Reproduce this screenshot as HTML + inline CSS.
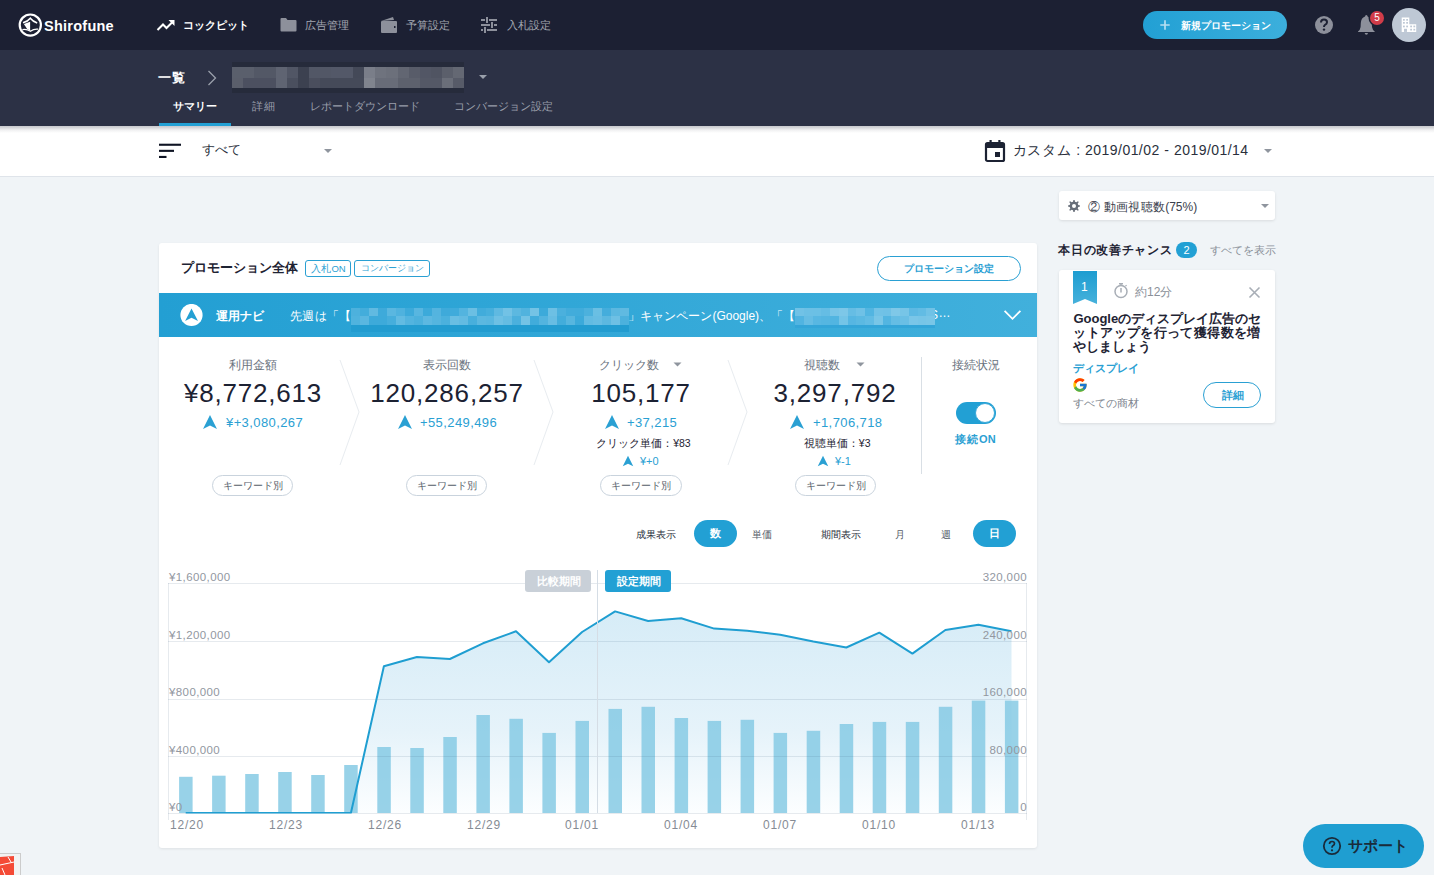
<!DOCTYPE html>
<html><head><meta charset="utf-8">
<style>
*{margin:0;padding:0;box-sizing:border-box}
html,body{width:1434px;height:875px;overflow:hidden;background:#f0f4f7;font-family:"Liberation Sans",sans-serif;color:#1e2333}
.a{position:absolute;white-space:nowrap}
#top{position:absolute;left:0;top:0;width:1434px;height:50px;background:#1c2033}
#sub{position:absolute;left:0;top:50px;width:1434px;height:76px;background:#2c3145}
#filter{position:absolute;left:0;top:126px;width:1434px;height:51px;background:linear-gradient(180deg,rgba(40,45,60,0.26) 0px,rgba(40,45,60,0.2) 1.5px,rgba(40,45,60,0.07) 4px,rgba(40,45,60,0.0) 7px),#fff;border-bottom:1px solid #dfe4ea}
.navt{font-size:11px;color:#a3a7b1;top:18px}
.tab{font-size:11px;color:#9a9fab}
.card{position:absolute;background:#fff;border-radius:3px;box-shadow:0 1px 2px rgba(0,0,0,0.08)}
.lbl{font-size:12px;color:#6b7380;text-align:center}
.big{font-size:26px;color:#1c2233;text-align:center;letter-spacing:0.8px}
.delta{font-size:13px;color:#2aa0d3;letter-spacing:0.4px}
.kw{position:absolute;height:21px;border:1px solid #c9d3dd;border-radius:11px;font-size:10px;color:#555d69;text-align:center;line-height:19px}
.axl{font-size:11.5px;color:#92979f;letter-spacing:0.4px;margin-top:1px}
.xl{font-size:12px;color:#858b94;letter-spacing:0.8px}
.jj{display:inline-block;vertical-align:top;text-align:justify;text-align-last:justify;white-space:nowrap}
.j{text-align:justify!important;text-align-last:justify!important;white-space:nowrap}
</style></head><body>
<!-- TOP NAV -->
<div id="top">
  <svg class="a" style="left:14px;top:9px" width="32" height="32" viewBox="0 0 32 32">
    <circle cx="16.3" cy="16.1" r="10.6" fill="none" stroke="#fff" stroke-width="2.2"/>
    <path d="M9 13.8 Q13.6 12.6 16.3 9.2 Q19 12.6 23.2 14" fill="none" stroke="#fff" stroke-width="1.6"/>
    <path d="M9.9 15 L16.1 12.8 L16.1 22 L12.6 19.2Z" fill="#fff"/>
    <path d="M8.4 20.6 Q12.5 19.6 16.4 22.3 Q20.2 19.6 24.2 20.2" fill="none" stroke="#fff" stroke-width="1.3"/>
  </svg>
  <div class="a" style="left:44px;top:18px;font-size:14.5px;font-weight:bold;color:#fff;letter-spacing:0.25px">Shirofune</div>
  <svg class="a" style="left:156px;top:18px" width="20" height="14" viewBox="0 0 20 14">
    <path d="M1.5 12 L7 6.5 L10.5 10 L17 3.5" fill="none" stroke="#fff" stroke-width="2"/>
    <path d="M12.5 2 L18.5 2 L18.5 8 Z" fill="#fff"/>
  </svg>
  <div class="j a navt" style="left:183.4px;width:63.2px;color:#fff;font-weight:bold">コックピット</div>
  <svg class="a" style="left:280px;top:17px" width="17" height="15" viewBox="0 0 17 15">
    <path d="M0.5 2 Q0.5 1 1.5 1 L6 1 L7.5 3 L15.5 3 Q16.5 3 16.5 4 L16.5 13.5 Q16.5 14.5 15.5 14.5 L1.5 14.5 Q0.5 14.5 0.5 13.5Z" fill="#8d909b"/>
  </svg>
  <div class="j a navt" style="left:304.4px;width:43.2px;left:305px">広告管理</div>
  <svg class="a" style="left:380px;top:16px" width="18" height="18" viewBox="0 0 18 18">
    <path d="M1 5 L13 1 L14 4 Z" fill="#8d909b"/>
    <rect x="1" y="5" width="16" height="12" rx="1" fill="#8d909b"/>
    <rect x="14" y="10" width="1.5" height="2" fill="#1c2033"/>
  </svg>
  <div class="j a navt" style="left:405.4px;width:43.2px;left:406px">予算設定</div>
  <svg class="a" style="left:480px;top:17px" width="18" height="16" viewBox="0 0 18 16">
    <rect x="1" y="2" width="4" height="2" fill="#8d909b"/><rect x="9" y="2" width="8" height="2" fill="#8d909b"/><rect x="6" y="0" width="2" height="6" fill="#8d909b"/>
    <rect x="1" y="7" width="9" height="2" fill="#8d909b"/><rect x="14" y="7" width="3" height="2" fill="#8d909b"/><rect x="11" y="5" width="2" height="6" fill="#8d909b"/>
    <rect x="1" y="12" width="2" height="2" fill="#8d909b"/><rect x="7" y="12" width="10" height="2" fill="#8d909b"/><rect x="4" y="10" width="2" height="6" fill="#8d909b"/>
  </svg>
  <div class="j a navt" style="left:506.4px;width:43.2px;left:507px">入札設定</div>
  <div class="a" style="left:1143px;top:11px;width:144px;height:28px;border-radius:14px;background:linear-gradient(90deg,#22a0d4,#3cafdc)"></div>
  <svg class="a" style="left:1160px;top:19.5px" width="10" height="10" viewBox="0 0 10 10"><path d="M5 0.3 L5 9.7 M0.3 5 L9.7 5" stroke="#b5def1" stroke-width="1.7"/></svg>
  <div class="j a" style="left:1181.4px;width:89.7px;top:18.5px;font-size:10px;font-weight:bold;color:#fff">新規プロモーション</div>
  <svg class="a" style="left:1314px;top:15px" width="20" height="20" viewBox="0 0 20 20">
    <circle cx="10" cy="10" r="9" fill="#8d909b"/>
    <path d="M7 7.5 Q7 4.5 10 4.5 Q13 4.5 13 7.2 Q13 8.8 11 9.8 Q10 10.3 10 12" fill="none" stroke="#1c2033" stroke-width="2"/>
    <circle cx="10" cy="14.6" r="1.2" fill="#1c2033"/>
  </svg>
  <svg class="a" style="left:1356px;top:14px" width="22" height="22" viewBox="0 0 22 22">
    <path d="M10.3 1 Q11.5 1 11.6 2.5 Q15.5 3.8 15.8 9 L16 13 Q16.5 16 18.7 17.5 L18.7 18 L2 18 L2 17.5 Q4.2 16 4.6 13 L4.8 9 Q5.1 3.8 9 2.5 Q9.1 1 10.3 1Z" fill="#8d909b"/>
    <path d="M8.7 19 L12 19 Q11.8 20.8 10.35 20.8 Q8.9 20.8 8.7 19Z" fill="#8d909b"/>
  </svg>
  <div class="a" style="left:1370px;top:11px;width:14px;height:14px;border-radius:7px;background:#d03c49;box-shadow:0 0 0 1.5px #1c2033;color:#fff;font-size:10px;text-align:center;line-height:14px">5</div>
  <div class="a" style="left:1392px;top:8px;width:34px;height:34px;border-radius:17px;background:#bec8d5"></div>
  <svg class="a" style="left:1400px;top:16px" width="18" height="18" viewBox="0 0 18 18">
    <path d="M1.7 15.9 L1.7 1.5 L9.3 1.5 L9.3 8.3 L16.2 8.3 L16.2 15.9 Z" fill="#fff"/>
    <g fill="#bec8d5"><rect x="3" y="3" width="1.8" height="1.7"/><rect x="6.2" y="3" width="1.8" height="1.7"/><rect x="3" y="6" width="1.8" height="1.7"/><rect x="6.2" y="6" width="1.8" height="1.7"/><rect x="3" y="9.6" width="1.8" height="1.7"/><rect x="6.2" y="9.6" width="1.8" height="1.7"/><rect x="10.2" y="9.6" width="1.8" height="1.7"/><rect x="13.4" y="9.6" width="1.8" height="1.7"/><rect x="10.2" y="12.8" width="1.8" height="1.7"/><rect x="13.4" y="12.8" width="1.8" height="1.7"/><rect x="4" y="12.8" width="3" height="3.1"/></g>
  </svg>
</div>
<!-- SUB HEADER -->
<div id="sub">
  <div class="j a" style="left:158.4px;width:26.2px;top:19px;font-size:13px;font-weight:bold;color:#fff">一覧</div>
  <svg class="a" style="left:206px;top:20px" width="12" height="16" viewBox="0 0 12 16"><path d="M2.5 1 L9.5 8 L2.5 15" fill="none" stroke="#9aa0ab" stroke-width="1.3"/></svg>
  <div class="a" style="left:231.6px;top:12px;width:232.2px;height:31.4px;background:#262b3b"></div>
<div class="a" style="left:231.6px;top:16.9px;width:11.4px;height:10.8px;background:#5a5f6c"></div>
<div class="a" style="left:231.6px;top:27.7px;width:11.4px;height:10.8px;background:#5a5e6b"></div>
<div class="a" style="left:242.7px;top:16.9px;width:11.4px;height:10.8px;background:#5a5f6c"></div>
<div class="a" style="left:242.7px;top:27.7px;width:11.4px;height:10.8px;background:#4c5060"></div>
<div class="a" style="left:253.7px;top:16.9px;width:11.4px;height:10.8px;background:#535866"></div>
<div class="a" style="left:253.7px;top:27.7px;width:11.4px;height:10.8px;background:#4c5060"></div>
<div class="a" style="left:264.8px;top:16.9px;width:11.4px;height:10.8px;background:#535866"></div>
<div class="a" style="left:264.8px;top:27.7px;width:11.4px;height:10.8px;background:#4c5060"></div>
<div class="a" style="left:275.8px;top:16.9px;width:11.4px;height:10.8px;background:#5f6472"></div>
<div class="a" style="left:275.8px;top:27.7px;width:11.4px;height:10.8px;background:#5f6472"></div>
<div class="a" style="left:286.9px;top:16.9px;width:11.4px;height:10.8px;background:#515665"></div>
<div class="a" style="left:286.9px;top:27.7px;width:11.4px;height:10.8px;background:#4a4f5e"></div>
<div class="a" style="left:297.9px;top:16.9px;width:11.4px;height:10.8px;background:#3c4150"></div>
<div class="a" style="left:297.9px;top:27.7px;width:11.4px;height:10.8px;background:#3c4150"></div>
<div class="a" style="left:309.0px;top:16.9px;width:11.4px;height:10.8px;background:#525766"></div>
<div class="a" style="left:309.0px;top:27.7px;width:11.4px;height:10.8px;background:#4a4e5d"></div>
<div class="a" style="left:320.1px;top:16.9px;width:11.4px;height:10.8px;background:#525766"></div>
<div class="a" style="left:320.1px;top:27.7px;width:11.4px;height:10.8px;background:#454a59"></div>
<div class="a" style="left:331.1px;top:16.9px;width:11.4px;height:10.8px;background:#535868"></div>
<div class="a" style="left:331.1px;top:27.7px;width:11.4px;height:10.8px;background:#454a59"></div>
<div class="a" style="left:342.2px;top:16.9px;width:11.4px;height:10.8px;background:#535868"></div>
<div class="a" style="left:342.2px;top:27.7px;width:11.4px;height:10.8px;background:#454a59"></div>
<div class="a" style="left:353.2px;top:16.9px;width:11.4px;height:10.8px;background:#444958"></div>
<div class="a" style="left:353.2px;top:27.7px;width:11.4px;height:10.8px;background:#454a59"></div>
<div class="a" style="left:364.3px;top:16.9px;width:11.4px;height:10.8px;background:#7a7e89"></div>
<div class="a" style="left:364.3px;top:27.7px;width:11.4px;height:10.8px;background:#80848e"></div>
<div class="a" style="left:375.3px;top:16.9px;width:11.4px;height:10.8px;background:#6f737e"></div>
<div class="a" style="left:375.3px;top:27.7px;width:11.4px;height:10.8px;background:#686c78"></div>
<div class="a" style="left:386.4px;top:16.9px;width:11.4px;height:10.8px;background:#6c707b"></div>
<div class="a" style="left:386.4px;top:27.7px;width:11.4px;height:10.8px;background:#686c78"></div>
<div class="a" style="left:397.5px;top:16.9px;width:11.4px;height:10.8px;background:#626672"></div>
<div class="a" style="left:397.5px;top:27.7px;width:11.4px;height:10.8px;background:#5d616d"></div>
<div class="a" style="left:408.5px;top:16.9px;width:11.4px;height:10.8px;background:#585c69"></div>
<div class="a" style="left:408.5px;top:27.7px;width:11.4px;height:10.8px;background:#5d616d"></div>
<div class="a" style="left:419.6px;top:16.9px;width:11.4px;height:10.8px;background:#525665"></div>
<div class="a" style="left:419.6px;top:27.7px;width:11.4px;height:10.8px;background:#545866"></div>
<div class="a" style="left:430.6px;top:16.9px;width:11.4px;height:10.8px;background:#505462"></div>
<div class="a" style="left:430.6px;top:27.7px;width:11.4px;height:10.8px;background:#545866"></div>
<div class="a" style="left:441.7px;top:16.9px;width:11.4px;height:10.8px;background:#5b5f6b"></div>
<div class="a" style="left:441.7px;top:27.7px;width:11.4px;height:10.8px;background:#6a6e79"></div>
<div class="a" style="left:452.7px;top:16.9px;width:11.4px;height:10.8px;background:#646873"></div>
<div class="a" style="left:452.7px;top:27.7px;width:11.4px;height:10.8px;background:#575b68"></div>
  <svg class="a" style="left:478px;top:24px" width="10" height="6" viewBox="0 0 10 6"><path d="M1 1 L9 1 L5 5Z" fill="#9aa0ab"/></svg>
  <div class="j a tab" style="left:173.0px;width:43.9px;top:49px;color:#fff;font-weight:bold">サマリー</div>
  <div class="j a tab" style="left:252.1px;width:22.5px;top:49px">詳細</div>
  <div class="j a tab" style="left:309.9px;width:108.3px;top:49px">レポートダウンロード</div>
  <div class="j a tab" style="left:454.2px;width:96.6px;top:49px">コンバージョン設定</div>
  <div class="a" style="left:159px;top:73px;width:72px;height:3px;background:#22a0d4"></div>
</div>
<!-- FILTER BAR -->
<div id="filter">
  <svg class="a" style="left:158px;top:16px" width="24" height="18" viewBox="0 0 24 18">
    <rect x="1" y="1.7" width="22" height="2.1" fill="#0f1424"/><rect x="1" y="7.8" width="15" height="2.1" fill="#0f1424"/><rect x="1" y="13.9" width="7.5" height="2.1" fill="#0f1424"/>
  </svg>
  <div class="j a" style="left:202.2px;width:37.6px;top:15.5px;font-size:12.5px;color:#2a2f3c">すべて</div>
  <svg class="a" style="left:323px;top:22px" width="10" height="6" viewBox="0 0 10 6"><path d="M1 1 L9 1 L5 5Z" fill="#8f959e"/></svg>
  <svg class="a" style="left:984px;top:13px" width="22" height="24" viewBox="0 0 22 24">
    <rect x="2" y="4" width="18" height="18" rx="1.5" fill="none" stroke="#1c2233" stroke-width="2.2"/>
    <rect x="2" y="4" width="18" height="5" fill="#1c2233"/>
    <rect x="5.5" y="1" width="2.2" height="4" fill="#1c2233"/><rect x="14.3" y="1" width="2.2" height="4" fill="#1c2233"/>
    <rect x="11" y="13" width="5" height="5" fill="#1c2233"/>
  </svg>
  <div class="j a" style="left:1012.7px;width:235.9px;top:16px;font-size:14px;color:#2a2f3c;letter-spacing:0.45px">カスタム : 2019/01/02 - 2019/01/14</div>
  <svg class="a" style="left:1263px;top:22px" width="10" height="6" viewBox="0 0 10 6"><path d="M1 1 L9 1 L5 5Z" fill="#8f959e"/></svg>
</div>

<!-- RIGHT COLUMN -->
<div class="card" style="left:1059px;top:191px;width:216px;height:29px;box-shadow:0 1px 3px rgba(0,0,0,0.1)"></div>
<svg class="a" style="left:1067px;top:199px" width="14" height="14" viewBox="0 0 14 14">
  <path d="M7 1 L8.2 1 L8.6 2.8 L10 3.4 L11.5 2.3 L12.4 3.2 L11.3 4.7 L11.9 6.1 L13.6 6.5 L13.6 7.7 L11.9 8.1 L11.3 9.5 L12.4 11 L11.5 11.9 L10 10.8 L8.6 11.4 L8.2 13.1 L7 13.1 L6.6 11.4 L5.2 10.8 L3.7 11.9 L2.8 11 L3.9 9.5 L3.3 8.1 L1.6 7.7 L1.6 6.5 L3.3 6.1 L3.9 4.7 L2.8 3.2 L3.7 2.3 L5.2 3.4 L6.6 2.8Z" fill="#666d78" transform="translate(-0.6,-0.1)"/>
  <circle cx="7" cy="7" r="2" fill="#fff"/>
</svg>
<div class="j a" style="left:1088.1px;width:109.1px;top:199px;font-size:12px;color:#3a404c">② 動画視聴数(75%)</div>
<svg class="a" style="left:1260px;top:203px" width="10" height="6" viewBox="0 0 10 6"><path d="M1 1 L9 1 L5 5Z" fill="#8f959e"/></svg>

<div class="j a" style="left:1058.4px;width:113.2px;top:242px;font-size:12px;font-weight:bold;color:#1e2333">本日の改善チャンス</div>
<div class="a" style="left:1176px;top:242px;width:21px;height:16px;border-radius:8px;background:#22a0d4;color:#fff;font-size:11px;text-align:center;line-height:16px">2</div>
<div class="j a" style="left:1210.4px;width:64.9px;top:244px;font-size:10.5px;color:#8a9099">すべてを表示</div>

<div class="card" style="left:1059px;top:270px;width:216px;height:153px;box-shadow:0 1px 3px rgba(0,0,0,0.1)"></div>
<svg class="a" style="left:1073px;top:271px" width="24" height="34" viewBox="0 0 24 34"><defs><linearGradient id="rg" x1="0" y1="0" x2="0" y2="1"><stop offset="0" stop-color="#1e9dd1"/><stop offset="1" stop-color="#46b1db"/></linearGradient></defs><path d="M0 0 L24 0 L24 33 L12 28 L0 33Z" fill="url(#rg)"/></svg>
<div class="a" style="left:1081px;top:280px;font-size:12px;color:#fff">1</div>
<svg class="a" style="left:1113px;top:282px" width="16" height="17" viewBox="0 0 16 17">
  <circle cx="8" cy="9.5" r="6" fill="none" stroke="#a8aeb6" stroke-width="1.5"/>
  <rect x="6" y="1" width="4" height="1.5" fill="#a8aeb6"/><rect x="7.3" y="2" width="1.4" height="2" fill="#a8aeb6"/>
  <path d="M8 10.5 L8 6" stroke="#a8aeb6" stroke-width="1.5"/><path d="M12.5 4.2 L13.6 3.1" stroke="#a8aeb6" stroke-width="1.2"/>
</svg>
<div class="j a" style="left:1135.1px;width:36.5px;top:284px;font-size:12px;color:#8a9099">約12分</div>
<svg class="a" style="left:1248px;top:286px" width="13" height="13" viewBox="0 0 13 13"><path d="M1.5 1.5 L11.5 11.5 M11.5 1.5 L1.5 11.5" stroke="#a8aeb6" stroke-width="1.6"/></svg>
<div class="a j" style="left:1073.4px;width:187px;top:312px;font-size:13px;line-height:14px;font-weight:bold;color:#1e2333">Googleのディスプレイ広告のセ</div>
<div class="a j" style="left:1073.4px;width:187px;top:326px;font-size:13px;line-height:14px;font-weight:bold;color:#1e2333">ットアップを行って獲得数を増</div>
<div class="a j" style="left:1073.4px;width:75.5px;top:340px;font-size:13px;line-height:14px;font-weight:bold;color:#1e2333">やしましょう</div>
<div class="j a" style="left:1073.4px;width:64.1px;top:361px;font-size:11px;font-weight:bold;color:#2aa0d3">ディスプレイ</div>
<svg class="a" style="left:1072px;top:377px" width="16" height="16" viewBox="0 0 48 48">
  <path fill="#FFC107" d="M43.6 20H24v8h11.3C33.7 32.7 29.3 36 24 36c-6.6 0-12-5.4-12-12s5.4-12 12-12c3.1 0 5.8 1.2 7.9 3l5.7-5.7C34 6.1 29.3 4 24 4 13 4 4 13 4 24s9 20 20 20 20-9 20-20c0-1.3-.1-2.7-.4-4z"/>
  <path fill="#FF3D00" d="M6.3 14.7l6.6 4.8C14.7 15.1 19 12 24 12c3.1 0 5.8 1.2 7.9 3l5.7-5.7C34 6.1 29.3 4 24 4 16.3 4 9.7 8.3 6.3 14.7z"/>
  <path fill="#4CAF50" d="M24 44c5.2 0 9.9-2 13.4-5.2l-6.2-5.2C29.2 35.1 26.7 36 24 36c-5.2 0-9.6-3.3-11.3-8l-6.5 5C9.5 39.6 16.2 44 24 44z"/>
  <path fill="#1976D2" d="M43.6 20H24v8h11.3c-.8 2.2-2.2 4.2-4.1 5.6l6.2 5.2C37 39.2 44 34 44 24c0-1.3-.1-2.7-.4-4z"/>
</svg>
<div class="j a" style="left:1073.4px;width:65.2px;top:396px;font-size:11px;color:#7d848e">すべての商材</div>
<div class="a" style="left:1203px;top:382px;width:58px;height:26px;border:1px solid #2aa0d3;border-radius:13px;color:#2aa0d3;font-size:10.5px;font-weight:bold;text-align:center;line-height:24px"><span class="jj" style="width:20.1px">詳細</span></div>

<!-- MAIN CARD -->
<div class="card" style="left:159px;top:243px;width:878px;height:605px;box-shadow:0 1px 3px rgba(0,0,0,0.08)"></div>
<div class="j a" style="left:180.9px;width:113.5px;top:260px;font-size:12.5px;font-weight:bold;color:#1e2333">プロモーション全体</div>
<div class="a" style="left:305px;top:260px;width:46px;height:17px;border:1px solid #2aa0d3;border-radius:3px;color:#2aa0d3;font-size:9.5px;text-align:center;line-height:15px"><span class="jj" style="width:33.2px">入札ON</span></div>
<div class="a" style="left:354px;top:260px;width:76px;height:17px;border:1px solid #2aa0d3;border-radius:3px;color:#2aa0d3;font-size:9px;text-align:center;line-height:15px"><span class="jj" style="width:62.7px">コンバージョン</span></div>
<div class="a" style="left:877px;top:256px;width:144px;height:25px;border:1px solid #2aa0d3;border-radius:13px;color:#2aa0d3;font-size:9.5px;font-weight:bold;text-align:center;line-height:23px"><span class="jj" style="width:89.3px">プロモーション設定</span></div>

<div class="a" style="left:159px;top:293px;width:878px;height:44px;background:linear-gradient(90deg,#239fd3,#41b0dc)"></div>
<svg class="a" style="left:180px;top:304px" width="23" height="23" viewBox="0 0 23 23"><circle cx="11.5" cy="11" r="11.1" fill="#fff"/><path d="M11.5 4.4 L18 17 L11.5 13.8 L5.1 17Z" fill="#24a0d3"/></svg>
<div class="j a" style="left:216.2px;width:46.7px;top:308px;font-size:12px;font-weight:bold;color:#fff">運用ナビ</div>
<div class="j a" style="left:290.0px;width:61.4px;top:308px;font-size:12px;color:#fff">先週は「【</div>
<div class="a" style="left:350.9px;top:324.7px;width:278.1px;height:7.0px;background:#229cd0"></div>
<div class="a" style="left:350.9px;top:307.7px;width:9.3px;height:8.6px;background:#4db1dd"></div>
<div class="a" style="left:359.9px;top:307.7px;width:9.3px;height:8.6px;background:#43addb"></div>
<div class="a" style="left:368.8px;top:307.7px;width:9.3px;height:8.6px;background:#61bae1"></div>
<div class="a" style="left:377.8px;top:307.7px;width:9.3px;height:8.6px;background:#3eaada"></div>
<div class="a" style="left:386.8px;top:307.7px;width:9.3px;height:8.6px;background:#5ab7e0"></div>
<div class="a" style="left:395.8px;top:307.7px;width:9.3px;height:8.6px;background:#4fb2de"></div>
<div class="a" style="left:404.7px;top:307.7px;width:9.3px;height:8.6px;background:#3daada"></div>
<div class="a" style="left:413.7px;top:307.7px;width:9.3px;height:8.6px;background:#58b6e0"></div>
<div class="a" style="left:422.7px;top:307.7px;width:9.3px;height:8.6px;background:#3caada"></div>
<div class="a" style="left:431.6px;top:307.7px;width:9.3px;height:8.6px;background:#54b4df"></div>
<div class="a" style="left:440.6px;top:307.7px;width:9.3px;height:8.6px;background:#3eaada"></div>
<div class="a" style="left:449.6px;top:307.7px;width:9.3px;height:8.6px;background:#3fabdb"></div>
<div class="a" style="left:458.6px;top:307.7px;width:9.3px;height:8.6px;background:#53b4df"></div>
<div class="a" style="left:467.5px;top:307.7px;width:9.3px;height:8.6px;background:#6bbfe3"></div>
<div class="a" style="left:476.5px;top:307.7px;width:9.3px;height:8.6px;background:#41acdb"></div>
<div class="a" style="left:485.5px;top:307.7px;width:9.3px;height:8.6px;background:#47afdc"></div>
<div class="a" style="left:494.4px;top:307.7px;width:9.3px;height:8.6px;background:#5fb9e1"></div>
<div class="a" style="left:503.4px;top:307.7px;width:9.3px;height:8.6px;background:#72c2e5"></div>
<div class="a" style="left:512.4px;top:307.7px;width:9.3px;height:8.6px;background:#5cb8e0"></div>
<div class="a" style="left:521.3px;top:307.7px;width:9.3px;height:8.6px;background:#51b3de"></div>
<div class="a" style="left:530.3px;top:307.7px;width:9.3px;height:8.6px;background:#74c3e5"></div>
<div class="a" style="left:539.3px;top:307.7px;width:9.3px;height:8.6px;background:#3caada"></div>
<div class="a" style="left:548.3px;top:307.7px;width:9.3px;height:8.6px;background:#6dc0e4"></div>
<div class="a" style="left:557.2px;top:307.7px;width:9.3px;height:8.6px;background:#4bb0dd"></div>
<div class="a" style="left:566.2px;top:307.7px;width:9.3px;height:8.6px;background:#42acdb"></div>
<div class="a" style="left:575.2px;top:307.7px;width:9.3px;height:8.6px;background:#41acdb"></div>
<div class="a" style="left:584.1px;top:307.7px;width:9.3px;height:8.6px;background:#4cb1dd"></div>
<div class="a" style="left:593.1px;top:307.7px;width:9.3px;height:8.6px;background:#6abfe3"></div>
<div class="a" style="left:602.1px;top:307.7px;width:9.3px;height:8.6px;background:#44addc"></div>
<div class="a" style="left:611.1px;top:307.7px;width:9.3px;height:8.6px;background:#5cb8e0"></div>
<div class="a" style="left:620.0px;top:307.7px;width:9.3px;height:8.6px;background:#60bae1"></div>
<div class="a" style="left:350.9px;top:316.2px;width:9.3px;height:8.6px;background:#50b3de"></div>
<div class="a" style="left:359.9px;top:316.2px;width:9.3px;height:8.6px;background:#5ab7e0"></div>
<div class="a" style="left:368.8px;top:316.2px;width:9.3px;height:8.6px;background:#3daada"></div>
<div class="a" style="left:377.8px;top:316.2px;width:9.3px;height:8.6px;background:#3daada"></div>
<div class="a" style="left:386.8px;top:316.2px;width:9.3px;height:8.6px;background:#46aedc"></div>
<div class="a" style="left:395.8px;top:316.2px;width:9.3px;height:8.6px;background:#62bbe2"></div>
<div class="a" style="left:404.7px;top:316.2px;width:9.3px;height:8.6px;background:#53b4df"></div>
<div class="a" style="left:413.7px;top:316.2px;width:9.3px;height:8.6px;background:#4cb1dd"></div>
<div class="a" style="left:422.7px;top:316.2px;width:9.3px;height:8.6px;background:#5db8e1"></div>
<div class="a" style="left:431.6px;top:316.2px;width:9.3px;height:8.6px;background:#55b5df"></div>
<div class="a" style="left:440.6px;top:316.2px;width:9.3px;height:8.6px;background:#4bb1dd"></div>
<div class="a" style="left:449.6px;top:316.2px;width:9.3px;height:8.6px;background:#69bee3"></div>
<div class="a" style="left:458.6px;top:316.2px;width:9.3px;height:8.6px;background:#63bbe2"></div>
<div class="a" style="left:467.5px;top:316.2px;width:9.3px;height:8.6px;background:#48afdc"></div>
<div class="a" style="left:476.5px;top:316.2px;width:9.3px;height:8.6px;background:#5cb8e0"></div>
<div class="a" style="left:485.5px;top:316.2px;width:9.3px;height:8.6px;background:#59b7e0"></div>
<div class="a" style="left:494.4px;top:316.2px;width:9.3px;height:8.6px;background:#6ec0e4"></div>
<div class="a" style="left:503.4px;top:316.2px;width:9.3px;height:8.6px;background:#65bce2"></div>
<div class="a" style="left:512.4px;top:316.2px;width:9.3px;height:8.6px;background:#4bb0dd"></div>
<div class="a" style="left:521.3px;top:316.2px;width:9.3px;height:8.6px;background:#74c3e5"></div>
<div class="a" style="left:530.3px;top:316.2px;width:9.3px;height:8.6px;background:#41acdb"></div>
<div class="a" style="left:539.3px;top:316.2px;width:9.3px;height:8.6px;background:#53b4df"></div>
<div class="a" style="left:548.3px;top:316.2px;width:9.3px;height:8.6px;background:#67bde3"></div>
<div class="a" style="left:557.2px;top:316.2px;width:9.3px;height:8.6px;background:#43addb"></div>
<div class="a" style="left:566.2px;top:316.2px;width:9.3px;height:8.6px;background:#57b6df"></div>
<div class="a" style="left:575.2px;top:316.2px;width:9.3px;height:8.6px;background:#3caada"></div>
<div class="a" style="left:584.1px;top:316.2px;width:9.3px;height:8.6px;background:#62bbe2"></div>
<div class="a" style="left:593.1px;top:316.2px;width:9.3px;height:8.6px;background:#67bde3"></div>
<div class="a" style="left:602.1px;top:316.2px;width:9.3px;height:8.6px;background:#5cb8e0"></div>
<div class="a" style="left:611.1px;top:316.2px;width:9.3px;height:8.6px;background:#6ec0e4"></div>
<div class="a" style="left:620.0px;top:316.2px;width:9.3px;height:8.6px;background:#4cb1dd"></div>
<div class="j a" style="left:628.4px;width:166.7px;top:308px;font-size:12px;color:#fff">」キャンペーン(Google)、「【</div>
<div class="a" style="left:930px;top:308px;font-size:12px;color:#fff">S</div>
<div class="a" style="left:795.0px;top:324.7px;width:140.0px;height:3.4px;background:#33a5d8"></div>
<div class="a" style="left:795.0px;top:307.7px;width:9.1px;height:8.6px;background:#71c2e6"></div>
<div class="a" style="left:803.8px;top:307.7px;width:9.1px;height:8.6px;background:#6cc0e5"></div>
<div class="a" style="left:812.5px;top:307.7px;width:9.1px;height:8.6px;background:#6bc0e5"></div>
<div class="a" style="left:821.2px;top:307.7px;width:9.1px;height:8.6px;background:#65bde4"></div>
<div class="a" style="left:830.0px;top:307.7px;width:9.1px;height:8.6px;background:#78c5e7"></div>
<div class="a" style="left:838.8px;top:307.7px;width:9.1px;height:8.6px;background:#7dc7e8"></div>
<div class="a" style="left:847.5px;top:307.7px;width:9.1px;height:8.6px;background:#66bde4"></div>
<div class="a" style="left:856.2px;top:307.7px;width:9.1px;height:8.6px;background:#6fc1e6"></div>
<div class="a" style="left:865.0px;top:307.7px;width:9.1px;height:8.6px;background:#52b5e1"></div>
<div class="a" style="left:873.8px;top:307.7px;width:9.1px;height:8.6px;background:#71c2e6"></div>
<div class="a" style="left:882.5px;top:307.7px;width:9.1px;height:8.6px;background:#6fc1e6"></div>
<div class="a" style="left:891.2px;top:307.7px;width:9.1px;height:8.6px;background:#7fc8e8"></div>
<div class="a" style="left:900.0px;top:307.7px;width:9.1px;height:8.6px;background:#77c5e7"></div>
<div class="a" style="left:908.8px;top:307.7px;width:9.1px;height:8.6px;background:#5db9e3"></div>
<div class="a" style="left:917.5px;top:307.7px;width:9.1px;height:8.6px;background:#62bce4"></div>
<div class="a" style="left:926.2px;top:307.7px;width:9.1px;height:8.6px;background:#70c2e6"></div>
<div class="a" style="left:795.0px;top:316.2px;width:9.1px;height:8.6px;background:#51b4e1"></div>
<div class="a" style="left:803.8px;top:316.2px;width:9.1px;height:8.6px;background:#66bde4"></div>
<div class="a" style="left:812.5px;top:316.2px;width:9.1px;height:8.6px;background:#58b7e2"></div>
<div class="a" style="left:821.2px;top:316.2px;width:9.1px;height:8.6px;background:#55b6e1"></div>
<div class="a" style="left:830.0px;top:316.2px;width:9.1px;height:8.6px;background:#52b5e1"></div>
<div class="a" style="left:838.8px;top:316.2px;width:9.1px;height:8.6px;background:#74c4e7"></div>
<div class="a" style="left:847.5px;top:316.2px;width:9.1px;height:8.6px;background:#56b6e2"></div>
<div class="a" style="left:856.2px;top:316.2px;width:9.1px;height:8.6px;background:#5bb9e2"></div>
<div class="a" style="left:865.0px;top:316.2px;width:9.1px;height:8.6px;background:#62bce4"></div>
<div class="a" style="left:873.8px;top:316.2px;width:9.1px;height:8.6px;background:#79c6e7"></div>
<div class="a" style="left:882.5px;top:316.2px;width:9.1px;height:8.6px;background:#53b5e1"></div>
<div class="a" style="left:891.2px;top:316.2px;width:9.1px;height:8.6px;background:#65bde4"></div>
<div class="a" style="left:900.0px;top:316.2px;width:9.1px;height:8.6px;background:#6abfe5"></div>
<div class="a" style="left:908.8px;top:316.2px;width:9.1px;height:8.6px;background:#7ac6e8"></div>
<div class="a" style="left:917.5px;top:316.2px;width:9.1px;height:8.6px;background:#77c5e7"></div>
<div class="a" style="left:926.2px;top:316.2px;width:9.1px;height:8.6px;background:#79c6e7"></div>
<div class="a" style="left:938.5px;top:305.5px;font-size:12px;color:#fff;letter-spacing:1px">…</div>
<svg class="a" style="left:1002px;top:308px" width="20" height="14" viewBox="0 0 20 14"><path d="M2.6 2.8 L10.5 10.8 L18.4 2.8" fill="none" stroke="#fff" stroke-width="1.8"/></svg>

<!-- STATS -->
<div class="j a lbl" style="left:229.4px;width:47.2px;top:357px;">利用金額</div>
<div class="a big" style="left:163px;top:378px;width:180px">¥8,772,613</div>
<svg class="a" style="left:202px;top:414px" width="16" height="16" viewBox="0 0 16 16"><path d="M8 1 L15 15 L8 11.5 L1 15Z" fill="#2aa0d3"/></svg>
<div class="a delta" style="left:226px;top:415px">¥+3,080,267</div>
<div class="kw" style="left:212px;top:475px;width:81px"><span class="jj" style="width:59.7px">キーワード別</span></div>

<div class="j a lbl" style="left:422.7px;width:47.9px;top:357px;">表示回数</div>
<div class="a big" style="left:357px;top:378px;width:180px">120,286,257</div>
<svg class="a" style="left:397px;top:414px" width="16" height="16" viewBox="0 0 16 16"><path d="M8 1 L15 15 L8 11.5 L1 15Z" fill="#2aa0d3"/></svg>
<div class="a delta" style="left:420px;top:415px">+55,249,496</div>
<div class="kw" style="left:406px;top:475px;width:81px"><span class="jj" style="width:59.7px">キーワード別</span></div>

<div class="j a lbl" style="left:598.9px;width:58.7px;top:357px">クリック数</div>
<svg class="a" style="left:673px;top:362px" width="9" height="5" viewBox="0 0 9 5"><path d="M0.5 0.5 L8.5 0.5 L4.5 4.5Z" fill="#8f959e"/></svg>
<div class="a big" style="left:551px;top:378px;width:180px">105,177</div>
<svg class="a" style="left:604px;top:414px" width="16" height="16" viewBox="0 0 16 16"><path d="M8 1 L15 15 L8 11.5 L1 15Z" fill="#2aa0d3"/></svg>
<div class="a delta" style="left:627px;top:415px">+37,215</div>
<div class="j a" style="left:596.2px;width:89.9px;top:437px;font-size:10.5px;color:#1e2333">クリック単価：¥83</div>
<svg class="a" style="left:622px;top:455px" width="12" height="12" viewBox="0 0 16 16"><path d="M8 1 L15 15 L8 11.5 L1 15Z" fill="#2aa0d3"/></svg>
<div class="a" style="left:640px;top:455px;font-size:11px;color:#2aa0d3">¥+0</div>
<div class="kw" style="left:600px;top:475px;width:82px"><span class="jj" style="width:59.7px">キーワード別</span></div>

<div class="j a lbl" style="left:803.8px;width:36.3px;top:357px">視聴数</div>
<svg class="a" style="left:856px;top:362px" width="9" height="5" viewBox="0 0 9 5"><path d="M0.5 0.5 L8.5 0.5 L4.5 4.5Z" fill="#8f959e"/></svg>
<div class="a big" style="left:745px;top:378px;width:180px">3,297,792</div>
<svg class="a" style="left:789px;top:414px" width="16" height="16" viewBox="0 0 16 16"><path d="M8 1 L15 15 L8 11.5 L1 15Z" fill="#2aa0d3"/></svg>
<div class="a delta" style="left:813px;top:415px">+1,706,718</div>
<div class="j a" style="left:803.8px;width:63.1px;top:437px;font-size:10.5px;color:#1e2333">視聴単価：¥3</div>
<svg class="a" style="left:817px;top:455px" width="12" height="12" viewBox="0 0 16 16"><path d="M8 1 L15 15 L8 11.5 L1 15Z" fill="#2aa0d3"/></svg>
<div class="a" style="left:835px;top:455px;font-size:11px;color:#2aa0d3">¥-1</div>
<div class="kw" style="left:795px;top:475px;width:81px"><span class="jj" style="width:59.7px">キーワード別</span></div>

<svg class="a" style="left:330px;top:355px" width="440" height="115" viewBox="0 0 440 115">
  <path d="M10 5 L29 57 L10 110" fill="none" stroke="#e8ecf0" stroke-width="1"/>
  <path d="M204 5 L223 57 L204 110" fill="none" stroke="#e8ecf0" stroke-width="1"/>
  <path d="M398 5 L417 57 L398 110" fill="none" stroke="#e8ecf0" stroke-width="1"/>
</svg>
<div class="a" style="left:921px;top:357px;width:1px;height:117px;background:#d9dfe5"></div>
<div class="j a lbl" style="left:951.7px;width:47.4px;top:357px">接続状況</div>
<div class="a" style="left:956px;top:402px;width:39.5px;height:21.5px;border-radius:11px;background:#22a0d4"></div>
<div class="a" style="left:974.5px;top:402.5px;width:20.5px;height:20.5px;border-radius:50%;background:#fff;border:1px solid #3aa9d9"></div>
<div class="j a" style="left:955.4px;width:40.2px;top:432px;font-size:11px;font-weight:bold;color:#2aa0d3">接続ON</div>

<!-- TOGGLES -->
<div class="j a" style="left:635.6px;width:40.2px;top:528px;font-size:10px;color:#2a2f3c">成果表示</div>
<div class="a" style="left:694px;top:520px;width:43px;height:27px;border-radius:14px;background:#22a0d4;color:#fff;font-size:11px;font-weight:bold;text-align:center;line-height:27px">数</div>
<div class="j a" style="left:751.9px;width:20.5px;top:528px;font-size:10px;color:#555d69">単価</div>
<div class="j a" style="left:820.9px;width:40.5px;top:528px;font-size:10px;color:#2a2f3c">期間表示</div>
<div class="a" style="left:895px;top:528px;font-size:10px;color:#555d69">月</div>
<div class="j a" style="left:941.4px;width:12.1px;top:528px;font-size:10px;color:#555d69">週</div>
<div class="a" style="left:973px;top:520px;width:43px;height:27px;border-radius:14px;background:#22a0d4;color:#fff;font-size:11px;font-weight:bold;text-align:center;line-height:27px">日</div>

<!-- CHART -->
<svg class="a" style="left:0;top:0" width="1434" height="875" viewBox="0 0 1434 875">
<defs><linearGradient id="ag" x1="0" y1="0" x2="0" y2="1"><stop offset="0" stop-color="#d6ecf7"/><stop offset="0.6" stop-color="#e6f3fa"/><stop offset="1" stop-color="#fcfeff"/></linearGradient></defs>
<path d="M350.9,813 L350.9,813.0 L383.9,666.3 L416.9,657.0 L449.9,659.0 L483.0,643.3 L516.0,631.3 L549.0,662.2 L582.1,632.0 L615.1,611.4 L648.1,621.0 L681.2,618.3 L714.2,628.6 L747.2,630.7 L780.2,634.8 L813.3,641.6 L846.3,647.5 L879.3,632.7 L912.4,653.6 L945.4,630.0 L978.4,624.8 L1011.5,631.3 L1011.5,813 Z" fill="url(#ag)"/>
<rect x="179.1" y="776.8" width="13.5" height="36.2" fill="#86cae4" fill-opacity="0.85"/>
<rect x="212.1" y="775.7" width="13.5" height="37.3" fill="#86cae4" fill-opacity="0.85"/>
<rect x="245.2" y="774.0" width="13.5" height="39.0" fill="#86cae4" fill-opacity="0.85"/>
<rect x="278.2" y="772.0" width="13.5" height="41.0" fill="#86cae4" fill-opacity="0.85"/>
<rect x="311.2" y="775.0" width="13.5" height="38.0" fill="#86cae4" fill-opacity="0.85"/>
<rect x="344.2" y="765.0" width="13.5" height="48.0" fill="#86cae4" fill-opacity="0.85"/>
<rect x="377.3" y="747.0" width="13.5" height="66.0" fill="#86cae4" fill-opacity="0.85"/>
<rect x="410.3" y="748.0" width="13.5" height="65.0" fill="#86cae4" fill-opacity="0.85"/>
<rect x="443.3" y="737.0" width="13.5" height="76.0" fill="#86cae4" fill-opacity="0.85"/>
<rect x="476.4" y="715.0" width="13.5" height="98.0" fill="#86cae4" fill-opacity="0.85"/>
<rect x="509.4" y="718.8" width="13.5" height="94.2" fill="#86cae4" fill-opacity="0.85"/>
<rect x="542.4" y="732.9" width="13.5" height="80.1" fill="#86cae4" fill-opacity="0.85"/>
<rect x="575.5" y="720.9" width="13.5" height="92.1" fill="#86cae4" fill-opacity="0.85"/>
<rect x="608.5" y="708.9" width="13.5" height="104.1" fill="#86cae4" fill-opacity="0.85"/>
<rect x="641.5" y="706.8" width="13.5" height="106.2" fill="#86cae4" fill-opacity="0.85"/>
<rect x="674.6" y="718.0" width="13.5" height="95.0" fill="#86cae4" fill-opacity="0.85"/>
<rect x="707.6" y="720.9" width="13.5" height="92.1" fill="#86cae4" fill-opacity="0.85"/>
<rect x="740.6" y="719.8" width="13.5" height="93.2" fill="#86cae4" fill-opacity="0.85"/>
<rect x="773.6" y="732.9" width="13.5" height="80.1" fill="#86cae4" fill-opacity="0.85"/>
<rect x="806.7" y="730.8" width="13.5" height="82.2" fill="#86cae4" fill-opacity="0.85"/>
<rect x="839.7" y="724.0" width="13.5" height="89.0" fill="#86cae4" fill-opacity="0.85"/>
<rect x="872.7" y="721.9" width="13.5" height="91.1" fill="#86cae4" fill-opacity="0.85"/>
<rect x="905.8" y="721.9" width="13.5" height="91.1" fill="#86cae4" fill-opacity="0.85"/>
<rect x="938.8" y="706.8" width="13.5" height="106.2" fill="#86cae4" fill-opacity="0.85"/>
<rect x="971.8" y="700.6" width="13.5" height="112.4" fill="#86cae4" fill-opacity="0.85"/>
<rect x="1004.9" y="700.6" width="13.5" height="112.4" fill="#86cae4" fill-opacity="0.85"/>
<line x1="168" y1="583.5" x2="1027" y2="583.5" stroke="rgb(60,90,120)" stroke-opacity="0.13" stroke-width="1"/>
<line x1="168" y1="641.5" x2="1027" y2="641.5" stroke="rgb(60,90,120)" stroke-opacity="0.13" stroke-width="1"/>
<line x1="168" y1="699.5" x2="1027" y2="699.5" stroke="rgb(60,90,120)" stroke-opacity="0.13" stroke-width="1"/>
<line x1="168" y1="756.5" x2="1027" y2="756.5" stroke="rgb(60,90,120)" stroke-opacity="0.13" stroke-width="1"/>
<line x1="168" y1="813.5" x2="1027" y2="813.5" stroke="rgb(60,90,120)" stroke-opacity="0.13" stroke-width="1"/>
<line x1="168.5" y1="583" x2="168.5" y2="820" stroke="rgb(60,90,120)" stroke-opacity="0.13" stroke-width="1"/>
<line x1="1026.5" y1="583" x2="1026.5" y2="820" stroke="rgb(60,90,120)" stroke-opacity="0.13" stroke-width="1"/>
<clipPath id="lc"><rect x="150" y="560" width="900" height="253.6"/></clipPath>
<path d="M185.7,813.0 L218.7,813.0 L251.8,813.0 L284.8,813.0 L317.8,813.0 L350.9,813.0 L383.9,666.3 L416.9,657.0 L449.9,659.0 L483.0,643.3 L516.0,631.3 L549.0,662.2 L582.1,632.0 L615.1,611.4 L648.1,621.0 L681.2,618.3 L714.2,628.6 L747.2,630.7 L780.2,634.8 L813.3,641.6 L846.3,647.5 L879.3,632.7 L912.4,653.6 L945.4,630.0 L978.4,624.8 L1011.5,631.3" fill="none" stroke="#1f9ed1" stroke-width="2" stroke-linejoin="round" clip-path="url(#lc)"/>
<line x1="597.5" y1="570" x2="597.5" y2="813" stroke="#d5dde5" stroke-width="1"/>
</svg>
<div class="a axl" style="left:169px;top:570px">¥1,600,000</div>
<div class="a axl" style="left:169px;top:628px">¥1,200,000</div>
<div class="a axl" style="left:169px;top:685px">¥800,000</div>
<div class="a axl" style="left:169px;top:743px">¥400,000</div>
<div class="a axl" style="left:169px;top:800px">¥0</div>
<div class="a axl" style="left:927px;top:570px;width:100px;text-align:right">320,000</div>
<div class="a axl" style="left:927px;top:628px;width:100px;text-align:right">240,000</div>
<div class="a axl" style="left:927px;top:685px;width:100px;text-align:right">160,000</div>
<div class="a axl" style="left:927px;top:743px;width:100px;text-align:right">80,000</div>
<div class="a axl" style="left:927px;top:800px;width:100px;text-align:right">0</div>
<div class="a xl" style="left:170px;top:818px">12/20</div>
<div class="a xl" style="left:269px;top:818px">12/23</div>
<div class="a xl" style="left:368px;top:818px">12/26</div>
<div class="a xl" style="left:467px;top:818px">12/29</div>
<div class="a xl" style="left:565px;top:818px">01/01</div>
<div class="a xl" style="left:664px;top:818px">01/04</div>
<div class="a xl" style="left:763px;top:818px">01/07</div>
<div class="a xl" style="left:862px;top:818px">01/10</div>
<div class="a xl" style="left:961px;top:818px">01/13</div>
<div class="a" style="left:525px;top:570px;width:66px;height:22px;border-radius:3px;background:#c9d0d8;color:#fff;font-size:10.5px;font-weight:bold;text-align:center;line-height:22px"><span class="jj" style="width:42.6px">比較期間</span></div>
<div class="a" style="left:605px;top:570px;width:66px;height:22px;border-radius:3px;background:#22a0d4;color:#fff;font-size:10.5px;font-weight:bold;text-align:center;line-height:22px"><span class="jj" style="width:42.6px">設定期間</span></div>

<!-- SUPPORT -->
<div class="a" style="left:1303px;top:824px;width:121px;height:44px;border-radius:22px;background:#1f9ed1"></div>
<svg class="a" style="left:1322px;top:836px" width="20" height="20" viewBox="0 0 20 20"><circle cx="10" cy="10" r="8.2" fill="none" stroke="#1a2b3a" stroke-width="1.8"/><path d="M7.5 8 Q7.5 5.5 10 5.5 Q12.5 5.5 12.5 7.6 Q12.5 9 10.8 9.8 Q10 10.3 10 11.8" fill="none" stroke="#1a2b3a" stroke-width="1.7"/><circle cx="10" cy="14.3" r="1.1" fill="#1a2b3a"/></svg>
<div class="j a" style="left:1348.4px;width:54.2px;top:837px;font-size:15px;font-weight:bold;color:#1a2b3a">サポート</div>

<!-- bottom-left widget -->
<div class="a" style="left:0;top:853px;width:21px;height:22px;background:#f2f2f2;border-right:1px solid #ccc;border-top:1px solid #ccc"></div>
<svg class="a" style="left:0;top:856px" width="14" height="19" viewBox="0 0 14 19"><path d="M0 1 L14 0 L14 19 L0 19Z" fill="#f44a36"/><path d="M0 9 L14 6 M2 12 L5 19 M8 1 L11 6" stroke="#fff" stroke-width="1"/></svg>
</body></html>
